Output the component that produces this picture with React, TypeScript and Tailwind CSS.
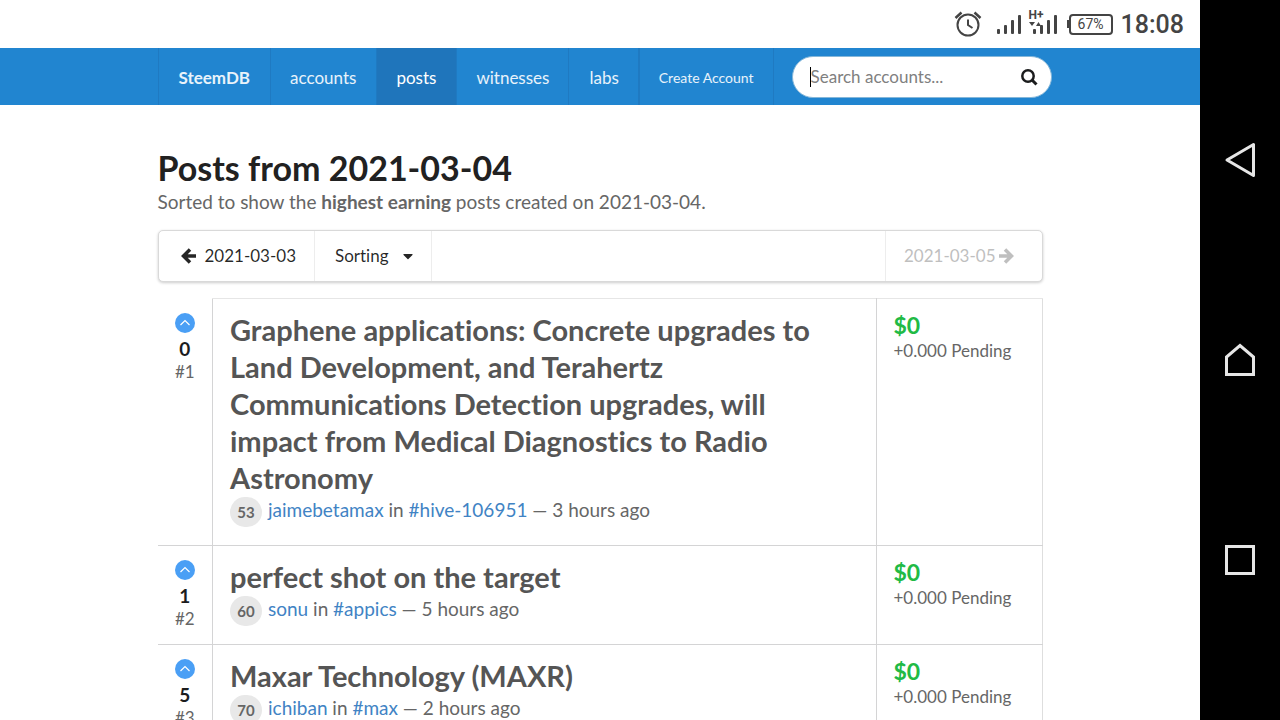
import React from 'react';
import { FaCaretDown } from 'react-icons/fa';

/* ─────────────────────────────────────────────
   Data
───────────────────────────────────────────── */
interface Post {
  votes: number;
  rank: number;
  title: string;
  reputation: number;
  author: string;
  tag: string;
  age: string;
}

const posts: Post[] = [
  {
    votes: 0,
    rank: 1,
    title:
      'Graphene applications: Concrete upgrades to Land Development, and Terahertz Communications Detection upgrades, will impact from Medical Diagnostics to Radio Astronomy',
    reputation: 53,
    author: 'jaimebetamax',
    tag: '#hive-106951',
    age: '3 hours ago',
  },
  {
    votes: 1,
    rank: 2,
    title: 'perfect shot on the target',
    reputation: 60,
    author: 'sonu',
    tag: '#appics',
    age: '5 hours ago',
  },
  {
    votes: 5,
    rank: 3,
    title: 'Maxar Technology (MAXR)',
    reputation: 70,
    author: 'ichiban',
    tag: '#max',
    age: '2 hours ago',
  },
];

/* ─────────────────────────────────────────────
   Phone status bar
───────────────────────────────────────────── */
const StatusBar: React.FC = () => (
  <div className="flex h-12 items-center justify-end bg-white pr-4 font-['Roboto',sans-serif] text-[#444]">
    <svg className="mr-[15px] h-7 w-7" viewBox="0 0 28 28" fill="none" stroke="currentColor" strokeWidth="2">
      <circle cx="14" cy="15" r="10.5" />
      <path d="M14 9.5V15l4.5 3" />
      <path d="M1.5 8 7.5 2.5M26.5 8l-6-5.5" strokeWidth="2.5" />
    </svg>
    <svg className="mr-2 h-7 w-6" viewBox="0 0 24 28" fill="currentColor">
      <rect x="0" y="19" width="3" height="5" rx="1" />
      <rect x="7" y="15" width="3" height="9" rx="1" />
      <rect x="14" y="10" width="3" height="14" rx="1" />
      <rect x="21" y="5" width="3" height="19" rx="1" />
    </svg>
    <div className="relative mr-[10px] h-7 w-7">
      <span className="absolute -top-px left-0 text-xs leading-3 font-bold">H+</span>
      <svg className="h-7 w-7" viewBox="0 0 28 28" fill="currentColor">
        <path d="M0 12h6l-3 4zM7 16h5l-2.500-4z" />
        <rect x="4" y="19" width="3" height="5" rx="1" />
        <rect x="11" y="15" width="3" height="9" rx="1" />
        <rect x="18" y="10" width="3" height="14" rx="1" />
        <rect x="25" y="5" width="3" height="19" rx="1" />
      </svg>
    </div>
    <div className="flex items-center">
      <span className="h-2 w-0.5 bg-[#444]" />
      <span className="mr-2 flex h-[21px] w-[44px] items-center justify-center rounded-sm border-2 border-[#444] text-sm">
        67%
      </span>
    </div>
    <span className="pt-0.5 text-[25px] font-medium">18:08</span>
  </div>
);

/* ─────────────────────────────────────────────
   Top navigation
───────────────────────────────────────────── */
interface NavItemProps {
  children: React.ReactNode;
  className?: string;
}

const NavItem: React.FC<NavItemProps> = ({ children, className = '' }) => (
  <a href="#" className={`flex items-center border-r border-[#1f7ac2] px-[19px] pt-0.5 ${className}`}>
    {children}
  </a>
);

const NavBar: React.FC = () => (
  <nav className="h-[57px] bg-[#2185d0] text-[17px] text-white/90">
    <div className="mx-auto flex h-full max-w-[885px]">
      <NavItem className="border-l pr-5 pl-5 font-bold">SteemDB</NavItem>
      <NavItem className="pr-5">accounts</NavItem>
      <NavItem className="bg-[#1f75bb] pr-5 text-white">posts</NavItem>
      <NavItem>witnesses</NavItem>
      <NavItem className="pl-5">labs</NavItem>
      <NavItem className="border-l text-sm whitespace-nowrap">Create Account</NavItem>
      <div className="ml-[18px] flex items-center">
        <label className="flex h-[42px] w-[260px] items-center rounded-full border border-[#85b7d9] bg-white pr-3 pl-[17px]">
          <span className="h-5 w-px bg-black" />
          <input
            type="text"
            aria-label="Search accounts"
            placeholder="Search accounts..."
            className="min-w-0 flex-1 bg-transparent text-black outline-none placeholder:text-[#808080]"
          />
          <svg className="h-5 w-5 text-[#1b1c1d]" viewBox="0 0 20 20" fill="none" stroke="currentColor" strokeWidth="2.500">
            <circle cx="9" cy="9" r="5.700" />
            <path d="m13 13 4.500 4.500" strokeWidth="3" />
          </svg>
        </label>
      </div>
    </div>
  </nav>
);

/* ─────────────────────────────────────────────
   Date / sorting menu
───────────────────────────────────────────── */
const Arrow: React.FC<{ className?: string }> = ({ className = '' }) => (
  <svg className={`h-4 w-4 ${className}`} viewBox="0 0 16 16" fill="none" stroke="currentColor" strokeWidth="3.500">
    <path d="M9 1.500 2.500 8 9 14.500M3 8h12" />
  </svg>
);

const DateMenu: React.FC = () => (
  <div className="flex h-[52px] rounded-[5px] border border-[#d9d9d9] bg-white text-[17px] text-black/85 shadow-[0_1px_3px_0_#00000033]">
    <a href="#" className="flex items-center border-r border-[#ededed] pr-[18px] pl-[22px]">
      <Arrow className="mr-2" />
      2021-03-03
    </a>
    <button type="button" className="flex items-center border-r border-[#ededed] pr-[17px] pl-5">
      Sorting
      <FaCaretDown className="ml-[13px] h-4 w-3" />
    </button>
    <a href="#" className="ml-auto flex items-center border-l border-[#ededed] pr-[28px] pl-[18px] text-[#bfbfbf]">
      2021-03-05
      <Arrow className="ml-0.5 rotate-180" />
    </a>
  </div>
);

/* ─────────────────────────────────────────────
   Post row
───────────────────────────────────────────── */
const PostRow: React.FC<{ post: Post }> = ({ post }) => (
  <tr className="align-top">
    <td className="border-b border-[#d4d4d5] pt-[14px] text-center text-[17px] leading-[23px]">
      <button type="button" aria-label="Upvote" className="mx-auto flex h-5 w-5 items-center justify-center rounded-full bg-[#4a9ff5]">
        <svg className="h-5 w-5" viewBox="0 0 20 20" fill="none" stroke="white" strokeWidth="1.200">
          <path d="m5.500 12 4.500-4.500 4.500 4.500" />
        </svg>
      </button>
      <div className="mt-1 text-[19px] font-bold text-[#1b1c1d]">{post.votes}</div>
      <div className="text-[#666]">#{post.rank}</div>
    </td>
    <td className="border border-[#d4d4d5] border-t-[#e6e6e6] px-[17px] pt-3 pb-[17px]">
      <h2 className="text-[29px] leading-[37px] font-bold text-[#555]">{post.title}</h2>
      <div className="flex h-8 pt-px text-[19px] leading-[26px] whitespace-pre text-[#666]">
        <span className="mr-1.5 flex h-[30px] w-8 items-center justify-center rounded-full bg-[#e8e8e8] text-[15px] font-bold">
          {post.reputation}
        </span>
        <a href="#" className="text-[#4183c4]">{post.author}</a>
        {' in '}
        <a href="#" className="text-[#4183c4]">{post.tag}</a>
        {` — ${post.age}`}
      </div>
    </td>
    <td className="border-y border-[#d4d4d5] border-t-[#e6e6e6] px-[17px] pt-[13px]">
      <div className="text-[23px] leading-[27px] font-bold text-[#21ba45]">$0</div>
      <div className="text-[17px] leading-[23px] text-[#666]">+0.000 Pending</div>
    </td>
  </tr>
);

/* ─────────────────────────────────────────────
   Phone navigation keys
───────────────────────────────────────────── */
const PhoneKeys: React.FC = () => (
  <div className="flex w-20 shrink-0 flex-col items-center justify-center gap-[164px] bg-black">
    <button type="button" aria-label="Back">
      <svg className="h-9 w-9" viewBox="0 0 36 36" fill="none" stroke="#e6e6e6" strokeWidth="3">
        <path d="M31.500 2.500v31L5 18z" strokeLinejoin="round" />
      </svg>
    </button>
    <button type="button" aria-label="Home">
      <svg className="h-9 w-9" viewBox="0 0 36 36" fill="none" stroke="#e6e6e6" strokeWidth="3">
        <path d="M4.500 32.500V15L18 3.500 31.500 15v17.500z" />
      </svg>
    </button>
    <button type="button" aria-label="Recent apps">
      <svg className="h-9 w-9" viewBox="0 0 36 36" fill="none" stroke="#e6e6e6" strokeWidth="3">
        <path d="M4.500 4.500h27v27h-27z" />
      </svg>
    </button>
  </div>
);

const App: React.FC = () => (
  <div className="flex h-screen overflow-hidden bg-white font-['Lato',sans-serif] [font-variant-ligatures:none]">
    <div className="min-w-0 flex-1 overflow-hidden">
      <StatusBar />
      <NavBar />
      <main className="mx-auto max-w-[885px] pt-[42px]">
        <h1 className="text-[34px] leading-[42px] font-bold text-[#212121]">Posts from 2021-03-04</h1>
        <p className="mb-[15px] text-[19px] leading-[26px] text-[#666]">
          Sorted to show the <b>highest earning</b> posts created on 2021-03-04.
        </p>
        <DateMenu />
        <table className="mt-4 w-full table-fixed border-collapse border-r border-[#dedede]">
          <colgroup>
            <col className="w-[55px]" />
            <col />
            <col className="w-[166px]" />
          </colgroup>
          <tbody>
            {posts.map((post) => (
              <PostRow key={post.rank} post={post} />
            ))}
          </tbody>
        </table>
      </main>
    </div>
    <PhoneKeys />
  </div>
);

export default App;
